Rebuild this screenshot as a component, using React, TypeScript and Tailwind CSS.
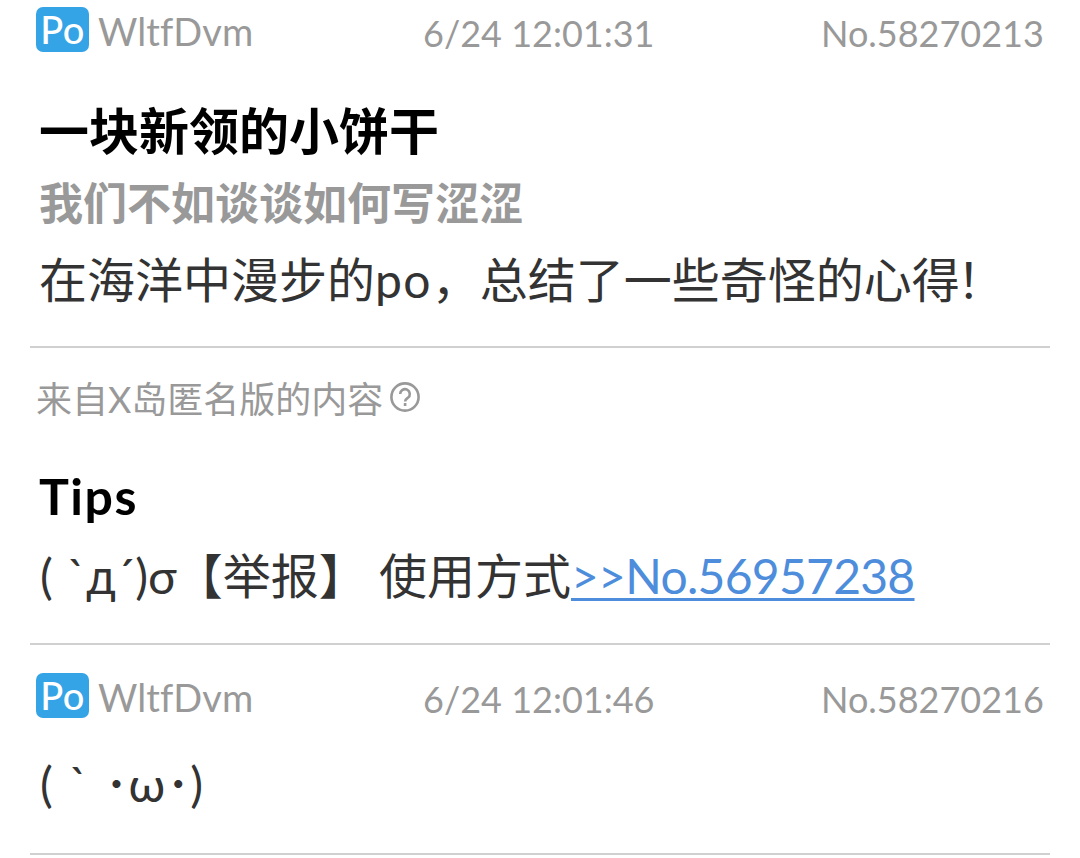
import React from 'react';

interface PostHeaderProps {
  time: string;
  no: string;
}

const PostHeader: React.FC<PostHeaderProps> = ({ time, no }) => (
  <header className="flex h-[62px] pl-9 text-[36px] leading-[54px] text-[#999]">
    <div className="flex w-[387px] shrink-0">
      <span className="mt-[7px] flex h-[45px] w-[53px] items-center justify-center rounded-[7px] bg-[#35a4e6] pb-[2px] text-[38px] font-medium tracking-[0.5px] text-white">Po</span>
      <span className="ml-[9px] mt-[4px] text-[38px] tracking-[0.1px] [font-variant-ligatures:none]">WltfDvm</span>
    </div>
    <span className="mt-[6px] w-[398px] shrink-0">{time}</span>
    <span className="mt-[6px]">{no}</span>
  </header>
);

const Divider: React.FC = () => <hr className="mx-[30px] border-0 border-t-2 border-[#d0d0d0]" />;

export default function App() {
  return (
    <main className="h-[858px] w-[1080px] overflow-hidden whitespace-nowrap bg-white font-[Lato,'Noto_Sans_CJK_SC',sans-serif] text-[#333]">
      <article className="h-[346px]">
        <PostHeader time="6/24 12:01:31" no="No.58270213" />
        <h1 className="pl-[39px] pt-[33px] text-[50px] font-bold leading-[72px] text-black">一块新领的小饼干</h1>
        <h2 className="pl-[39px] text-[44px] font-bold leading-[72px] text-[#999]">我们不如谈谈如何写涩涩</h2>
        <p className="pl-[39px] text-[48px] leading-[81px]">
          在海洋中漫步的<span className="tracking-[1.3px]">po</span>，总结了一些奇怪的心得<span className="-ml-[3px]">！</span>
        </p>
      </article>
      <Divider />
      <section className="h-[295px]">
        <div className="flex items-center pl-9 pt-6 text-[36px] leading-[54px] text-[#999]">
          来自X岛匿名版的内容
          <svg className="mb-[5px] ml-[7px] size-[30px]" viewBox="0 0 30 30" fill="none" stroke="currentColor" strokeWidth="2.6">
            <circle cx="15" cy="15" r="13.6" />
            <path d="M10.2 12a4.8 4.8 0 1 1 7.7 3.8c-1.8 1.3-2.8 1.8-2.8 3.7M15.1 21v3" />
          </svg>
        </div>
        <h2 className="pl-[39px] pt-[34px] text-[50px] font-bold leading-[72px] tracking-[1.5px] text-black">Tips</h2>
        <p className="pl-10 pt-[3px] text-[48px] leading-[82px]">
          <span className="[word-spacing:2px]">( `д´)σ</span><span className="-ml-[2px]">【举报】 使用方式</span>
          <a className="text-[#4d8ddb] underline decoration-[3px] underline-offset-[4px] tracking-[-0.72px]">&gt;&gt;No.56957238</a>
        </p>
      </section>
      <Divider />
      <article className="h-[208px] pt-[21px]">
        <PostHeader time="6/24 12:01:46" no="No.58270216" />
        <p className="pl-10 pt-[15px] text-[48px] leading-[82px] [word-spacing:4px]">( ` ･<span className="tracking-[1px]">ω</span>･)</p>
      </article>
      <Divider />
    </main>
  );
}
